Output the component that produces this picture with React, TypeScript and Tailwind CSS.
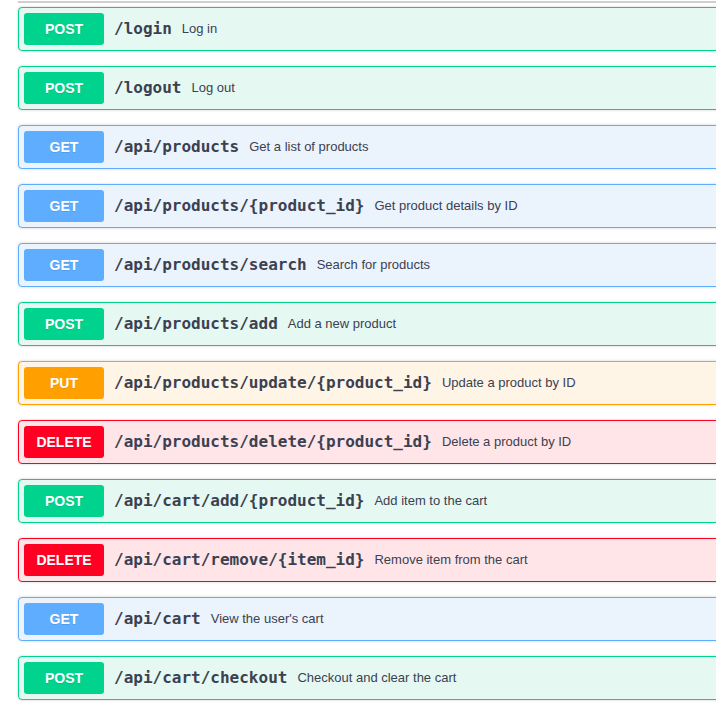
import React from "react";

type Method = "POST" | "GET" | "PUT" | "DELETE";

const rows: { m: Method; path: string; desc: string }[] = [
  { m: "POST", path: "/login", desc: "Log in" },
  { m: "POST", path: "/logout", desc: "Log out" },
  { m: "GET", path: "/api/products", desc: "Get a list of products" },
  { m: "GET", path: "/api/products/{product_id}", desc: "Get product details by ID" },
  { m: "GET", path: "/api/products/search", desc: "Search for products" },
  { m: "POST", path: "/api/products/add", desc: "Add a new product" },
  { m: "PUT", path: "/api/products/update/{product_id}", desc: "Update a product by ID" },
  { m: "DELETE", path: "/api/products/delete/{product_id}", desc: "Delete a product by ID" },
  { m: "POST", path: "/api/cart/add/{product_id}", desc: "Add item to the cart" },
  { m: "DELETE", path: "/api/cart/remove/{item_id}", desc: "Remove item from the cart" },
  { m: "GET", path: "/api/cart", desc: "View the user's cart" },
  { m: "POST", path: "/api/cart/checkout", desc: "Checkout and clear the cart" },
];

const styles: Record<Method, { box: string; badge: string }> = {
  POST: { box: "border-[#00d38d] bg-[#e5f9f2]", badge: "bg-[#00d38d]" },
  GET: { box: "border-[#5eadff] bg-[#ebf3fd]", badge: "bg-[#5eadff]" },
  PUT: { box: "border-[#ffa000] bg-[#fff5e6]", badge: "bg-[#ffa000]" },
  DELETE: { box: "border-[#ff0022] bg-[#ffe5e8]", badge: "bg-[#ff0022]" },
};

export default function App() {
  return (
    <div className="w-[716px] h-[707px] overflow-hidden bg-white">
      <div className="pl-[18px] w-[760px]">
        <div className="mt-px h-[2px] bg-[#cfcfcf]" />
        <div className="mt-[4px] flex flex-col gap-[15px]">
          {rows.map((r, i) => (
            <div
              key={i}
              className={`flex items-center h-[44px] border rounded-[4px] p-[5px] shadow-[0_0_3px_rgba(0,0,0,0.19)] ${styles[r.m].box}`}
            >
              <div
                className={`w-[80px] h-[32px] flex items-center justify-center rounded-[3px] text-white text-[14px] font-bold [text-shadow:0_1px_0_rgba(0,0,0,0.1)] ${styles[r.m].badge}`}
                style={{ fontFamily: '"Liberation Sans", Arial, sans-serif' }}
              >
                {r.m}
              </div>
              <span
                className="px-[10px] text-[16px] font-bold text-[#3b4151]"
                style={{ fontFamily: '"DejaVu Sans Mono", "Liberation Mono", monospace' }}
              >
                {r.path}
              </span>
              <span
                className="text-[13px] text-[#3b4151]"
                style={{ fontFamily: '"Liberation Sans", Arial, sans-serif' }}
              >
                {r.desc}
              </span>
            </div>
          ))}
        </div>
      </div>
    </div>
  );
}
